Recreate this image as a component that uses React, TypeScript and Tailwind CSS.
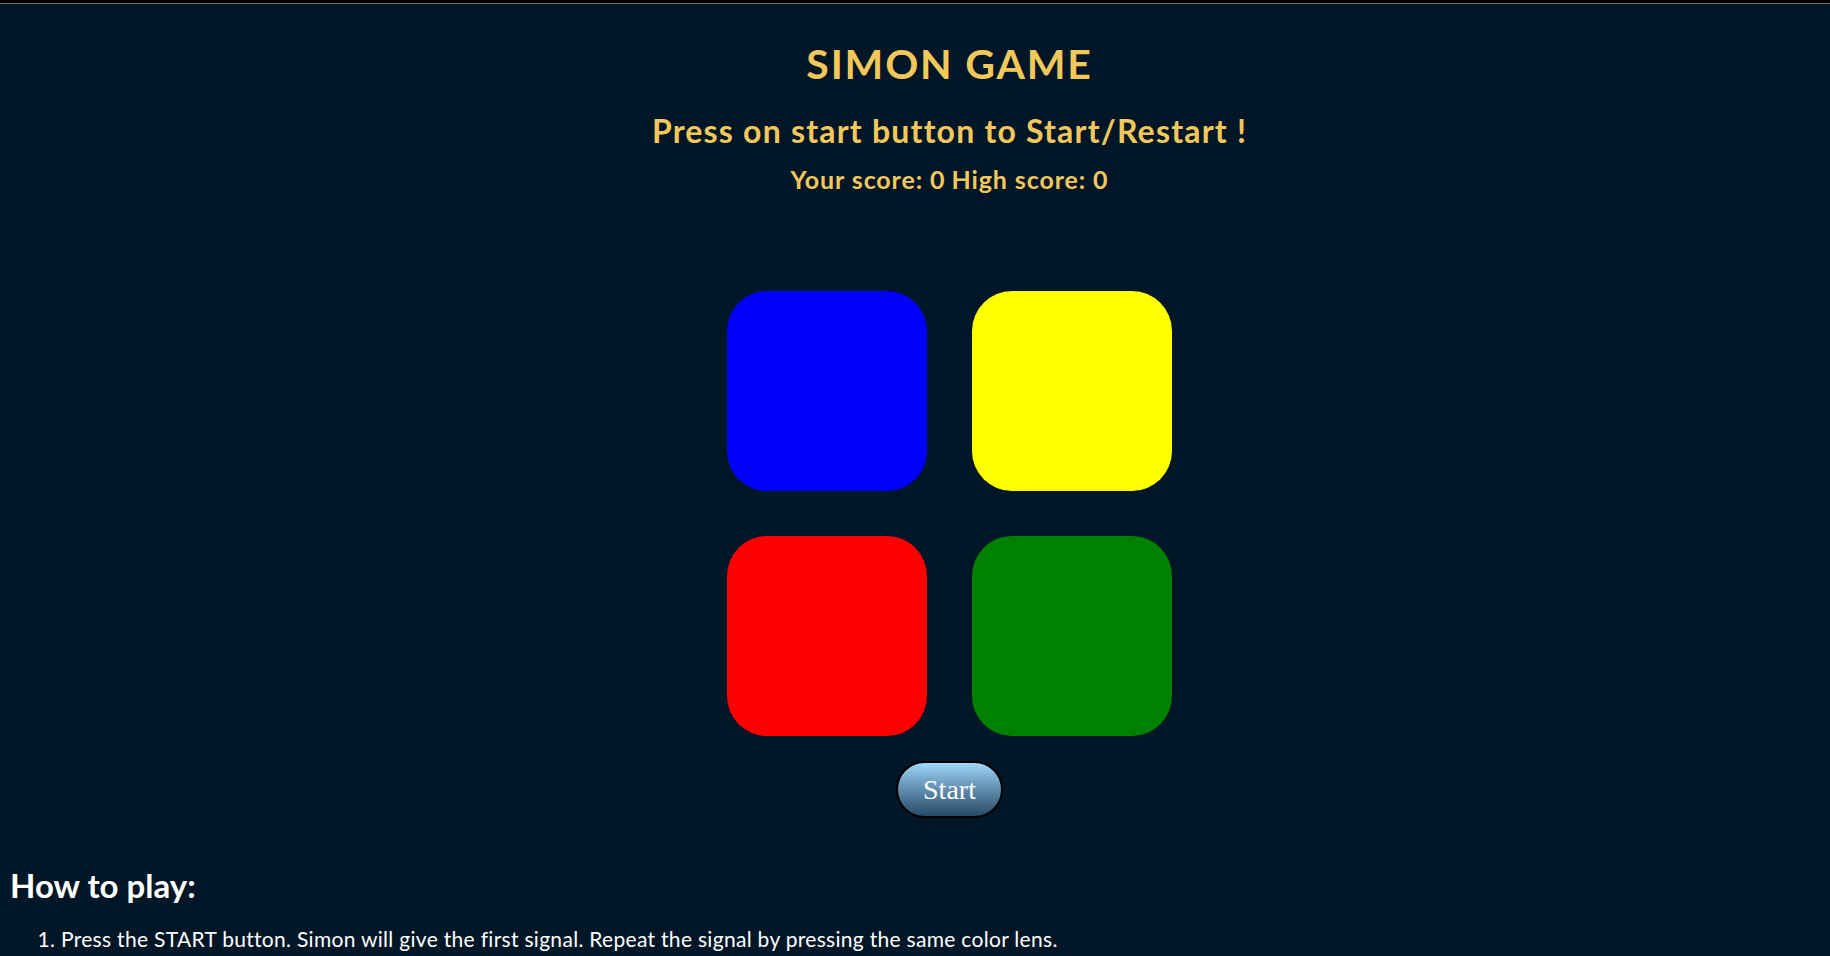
export default function App() {
  const pads = ["bg-[#0000ff]", "bg-[#ffff00]", "bg-[#ff0000]", "bg-[#008000]"];

  return (
    <div
      className="min-h-screen bg-[#011627] text-[#f3c85b]"
      style={{ fontFamily: '"Comic Sans MS", Lato, sans-serif' }}
    >
      {/* browser strip at the very top */}
      <div className="h-[4px] bg-black border-b border-[#6b6b6b]" />

      {/* ── Centered game column ── */}
      <div className="flex flex-col items-center pl-[69px]">
        <h1 className="mt-[35px] text-[41px] leading-[50px] font-bold tracking-[1.8px]">SIMON GAME</h1>
        <h2 className="mt-[22px] text-[32px] leading-[40px] font-bold tracking-[1.2px]">
          Press on start button to Start/Restart !
        </h2>
        <div className="mt-[12px] flex gap-[6px] text-[25px] leading-[32px] font-bold tracking-[0.9px]">
          <span>Your score: 0</span>
          <span>High score: 0</span>
        </div>

        <div className="mt-[96px] grid grid-cols-[200px_200px] gap-[45px]">
          {pads.map((c) => (
            <div key={c} className={`h-[200px] w-[200px] rounded-[40px] ${c}`} />
          ))}
        </div>

        <button
          className="mt-[25px] h-[57px] w-[107px] rounded-full border-2 border-black bg-gradient-to-b from-[#9fd7fb] to-[#284a66] text-[28px] text-white"
          style={{ fontFamily: '"Liberation Serif", "DejaVu Serif", serif' }}
        >
          Start
        </button>
      </div>

      {/* ── How to play ── */}
      <div className="px-[10px] text-white">
        <h3 className="mt-[47px] text-[33px] leading-[40px] font-bold">How to play:</h3>
        <ol className="mt-[20px] list-decimal pl-[51px] text-[21px] leading-[28px] tracking-[0.3px]">
          <li>Press the START button. Simon will give the first signal. Repeat the signal by pressing the same color lens.</li>
        </ol>
      </div>
    </div>
  );
}
